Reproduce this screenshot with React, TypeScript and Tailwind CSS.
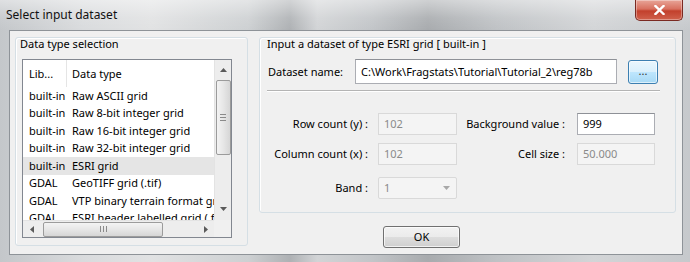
import React from "react";

const rows: [string, string][] = [
  ["built-in", "Raw ASCII grid"],
  ["built-in", "Raw 8-bit integer grid"],
  ["built-in", "Raw 16-bit integer grid"],
  ["built-in", "Raw 32-bit integer grid"],
  ["built-in", "ESRI grid"],
  ["GDAL", "GeoTIFF grid (.tif)"],
  ["GDAL", "VTP binary terrain format grid (.bt)"],
  ["GDAL", "ESRI header labelled grid (.flt)"],
];

function Tri({ dir }: { dir: "up" | "down" | "left" | "right" }) {
  const pts =
    dir === "up"
      ? "0,4 7,4 3.5,0"
      : dir === "down"
      ? "0,0 7,0 3.5,4"
      : dir === "left"
      ? "4,0 4,7 0,3.5"
      : "0,0 0,7 4,3.5";
  const w = dir === "up" || dir === "down" ? 7 : 4;
  const h = dir === "up" || dir === "down" ? 4 : 7;
  return (
    <svg width={w} height={h} viewBox={`0 0 ${w} ${h}`}>
      <polygon points={pts} fill="#5a5a5a" />
    </svg>
  );
}

export default function App() {
  return (
    <div className="relative w-[690px] h-[262px] overflow-hidden flex flex-col font-[family-name:'Noto_Sans','Liberation_Sans',sans-serif] text-[11px] text-black bg-[linear-gradient(90deg,#c4c7ca_0%,#d9dbdd_12%,#e1e2e3_22%,#cdd0d2_36%,#aeb1b4_42%,#d2d4d6_46%,#c2c5c8_54%,#a8abae_62%,#bfc2c5_72%,#d3d5d7_86%,#c6c9cc_100%)]">
      {/* title bar */}
      <div className="h-[30px] flex items-start justify-between bg-[linear-gradient(180deg,rgba(255,255,255,0.45)_0%,rgba(255,255,255,0.1)_60%,rgba(255,255,255,0)_100%)]">
        <div className="pl-[6px] pt-[7px] text-[12px] leading-[16px] text-[#111]">Select input dataset</div>
        <div className="mr-[7px] w-[48px] h-[21px] rounded-b-[5px] border border-t-0 border-[#7a2a22] bg-[linear-gradient(180deg,#e8a598_0%,#d8705f_45%,#c2402c_55%,#d0614c_100%)] flex items-center justify-center shadow-[inset_0_0_0_1px_rgba(255,255,255,0.35)]">
          <svg width="11" height="10" viewBox="0 0 11 10">
            <path d="M1.5 1 L9.5 9 M9.5 1 L1.5 9" stroke="#ffffff" strokeWidth="2.4" strokeLinecap="square" />
          </svg>
        </div>
      </div>

      {/* client area */}
      <div className="ml-[9px] mr-[7px] h-[225px] bg-[#f0f0f0] border border-[#8e9398] flex items-start pl-[5px] pt-[6px]">
        {/* left group */}
        <div className="w-[233px] h-[209px] border border-[#d5dfe5] rounded-[3px] shadow-[inset_1px_1px_0_#ffffff] flex flex-col">
          <div className="-mt-[1px] h-[14px] leading-[14px] pl-[4px]">Data type selection</div>
          <div className="mt-[8px] ml-[6px] w-[210px] h-[179px] border border-[#828790] bg-white flex flex-col">
            <div className="flex h-[160px]">
              <div className="w-[191px] h-[160px] overflow-hidden flex flex-col">
                <div className="h-[27px] shrink-0 flex items-center">
                  <div className="w-[43px] pl-[6px] leading-[14px]">Lib...</div>
                  <div className="w-px h-[27px] bg-[#e5e5e5]" />
                  <div className="pl-[5px] leading-[14px]">Data type</div>
                </div>
                {rows.map(([a, b], i) => (
                  <div
                    key={i}
                    className={`h-[17.5px] shrink-0 flex items-center whitespace-nowrap ${i === 4 ? "bg-[#e5e5e5]" : ""}`}
                  >
                    <div className="w-[43px] shrink-0 pl-[6px] leading-[14px]">{a}</div>
                    <div className="pl-[6px] leading-[14px]">{b}</div>
                  </div>
                ))}
              </div>
              {/* vertical scrollbar */}
              <div className="w-[17px] h-[160px] bg-[#ededed] border-l border-[#e3e3e3] flex flex-col items-center">
                <div className="h-[17px] w-full flex items-center justify-center pt-[3px]">
                  <Tri dir="up" />
                </div>
                <div className="mt-[3px] w-[15px] h-[75px] rounded-[2px] border border-[#9b9b9b] bg-[linear-gradient(90deg,#f3f3f3_0%,#e6e6e6_50%,#d6d6d6_100%)] flex flex-col items-center justify-center gap-[2px]">
                  <div className="w-[6px] h-px bg-[#8a8a8a]" />
                  <div className="w-[6px] h-px bg-[#8a8a8a]" />
                  <div className="w-[6px] h-px bg-[#8a8a8a]" />
                </div>
                <div className="flex-1" />
                <div className="h-[17px] w-full flex items-center justify-center pb-[6px]">
                  <Tri dir="down" />
                </div>
              </div>
            </div>
            {/* horizontal scrollbar */}
            <div className="flex h-[17px]">
              <div className="w-[191px] h-[17px] bg-[#ededed] border-t border-[#e3e3e3] flex items-center">
                <div className="w-[17px] flex items-center justify-center">
                  <Tri dir="left" />
                </div>
                <div className="ml-[3px] w-[120px] h-[15px] rounded-[2px] border border-[#9b9b9b] bg-[linear-gradient(180deg,#f3f3f3_0%,#e6e6e6_50%,#d6d6d6_100%)] flex items-center justify-center gap-[2px]">
                  <div className="w-px h-[6px] bg-[#8a8a8a]" />
                  <div className="w-px h-[6px] bg-[#8a8a8a]" />
                  <div className="w-px h-[6px] bg-[#8a8a8a]" />
                </div>
                <div className="flex-1" />
                <div className="w-[17px] flex items-center justify-center">
                  <Tri dir="right" />
                </div>
              </div>
              <div className="w-[17px] h-[17px] bg-[#f0f0f0]" />
            </div>
          </div>
        </div>

        {/* right column */}
        <div className="ml-[11px] flex flex-col">
          <div className="w-[417px] h-[176px] border border-[#d5dfe5] rounded-[3px] shadow-[inset_1px_1px_0_#ffffff] flex flex-col">
            <div className="-mt-[1px] h-[14px] leading-[14px] pl-[7px]">Input a dataset of type ESRI grid [ built-in ]</div>
            <div className="mt-[8px] pl-[8px] flex items-start">
              <div className="w-[87px] h-[25px] flex items-center leading-[14px]">Dataset name:</div>
              <div className="w-[262px] h-[25px] border border-[#abadb3] border-t-[#8e9197] bg-white flex items-center pl-[5px] leading-[14px] whitespace-nowrap overflow-hidden">
                C:\Work\Fragstats\Tutorial\Tutorial_2\reg78b
              </div>
              <div className="ml-[11px] mt-[1px] w-[30px] h-[24px] rounded-[3px] border border-[#3c7fb1] bg-[linear-gradient(180deg,#eaf6fd_0%,#d9f0fc_50%,#bee6fd_51%,#a7d9f5_100%)] shadow-[inset_0_0_0_1px_rgba(255,255,255,0.6)] flex items-center justify-center text-[#333] leading-[10px] pb-[2px]">
                ...
              </div>
            </div>
            <div className="mt-[6px] ml-[7px] w-[393px] h-[2px] border-t border-[#b4b4b4] border-b border-b-white" />
            <div className="mt-[21px] pl-[7px] flex items-center">
              <div className="w-[101px] text-right leading-[14px]">Row count (y) :</div>
              <div className="ml-[10px] w-[79px] h-[22px] border border-[#d9d9d9] bg-[#f4f4f4] flex items-center pl-[5px] text-[#8a8a8a] leading-[14px]">102</div>
              <div className="w-[108px] text-right leading-[14px]">Background value :</div>
              <div className="ml-[12px] w-[78px] h-[22px] border border-[#abadb3] border-t-[#8e9197] bg-white flex items-center pl-[5px] leading-[14px]">999</div>
            </div>
            <div className="mt-[8px] pl-[7px] flex items-center">
              <div className="w-[101px] text-right leading-[14px]">Column count (x) :</div>
              <div className="ml-[10px] w-[79px] h-[22px] border border-[#d9d9d9] bg-[#f4f4f4] flex items-center pl-[5px] text-[#8a8a8a] leading-[14px]">102</div>
              <div className="w-[108px] text-right leading-[14px]">Cell size :</div>
              <div className="ml-[12px] w-[78px] h-[22px] border border-[#d9d9d9] bg-[#f4f4f4] flex items-center pl-[5px] text-[#8a8a8a] leading-[14px]">50.000</div>
            </div>
            <div className="mt-[12px] pl-[7px] flex items-center">
              <div className="w-[101px] text-right leading-[14px]">Band :</div>
              <div className="ml-[10px] w-[79px] h-[22px] border border-[#d9d9d9] rounded-[2px] bg-[#f4f4f4] flex items-center pl-[5px] pr-[6px] text-[#8a8a8a] leading-[14px]">
                <span className="flex-1">1</span>
                <svg width="7" height="4" viewBox="0 0 7 4">
                  <polygon points="0,0 7,0 3.5,4" fill="#a8a8a8" />
                </svg>
              </div>
            </div>
          </div>
          <div className="mt-[13px] ml-[124px] w-[77px] h-[22px] rounded-[3px] border border-[#707070] bg-[linear-gradient(180deg,#f2f2f2_0%,#ebebeb_50%,#dddddd_51%,#cfcfcf_100%)] shadow-[inset_0_0_0_1px_rgba(255,255,255,0.7)] flex items-center justify-center leading-[14px]">
            OK
          </div>
        </div>
      </div>
    </div>
  );
}
